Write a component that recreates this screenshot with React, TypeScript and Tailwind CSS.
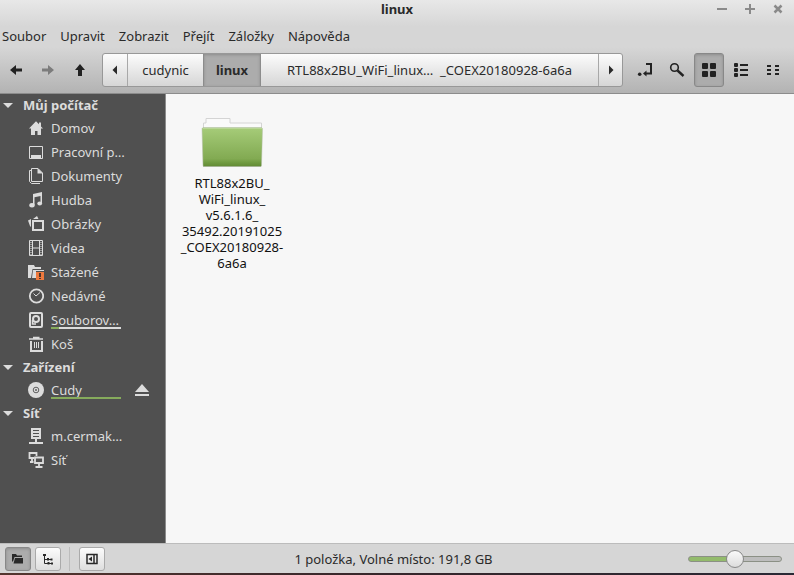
import { useState, type CSSProperties, type ReactNode } from "react";

const menus = ["Soubor", "Upravit", "Zobrazit", "Přejít", "Záložky", "Nápověda"];

const Icon = ({ children, className = "size-4" }: { children: ReactNode; className?: string }) => (
  <svg
    className={`${className} shrink-0`}
    viewBox="0 0 16 16"
    fill="none"
    stroke="currentColor"
    aria-hidden="true"
  >
    {children}
  </svg>
);

const icons: Record<string, ReactNode> = {
  home: (
    <path
      d="M8 1.2 1 8.5h2V15h4v-4h2.500v4H13V8.500h2L13 6.400V2.500h-2v1.800z"
      fill="currentColor"
      stroke="none"
    />
  ),
  desktop: (
    <>
      <path d="M1.500 2.500h13v12h-13z" />
      <path d="M3 11h10v3H3z" fill="currentColor" stroke="none" />
    </>
  ),
  documents: (
    <>
      <path d="M3.500.500h6.500l4.500 4.500v8.500h-11z" />
      <path d="M9.500 0v5.500H15z" fill="currentColor" stroke="none" />
      <path d="M3 2.500H1.500v11l2 2H12" />
    </>
  ),
  music: (
    <>
      <path d="M5 2 14 0v11.500h-1.500V4L6.500 5.300V13H5z" fill="currentColor" stroke="none" />
      <ellipse cx="4" cy="13.300" rx="2.700" ry="2.200" fill="currentColor" stroke="none" />
      <ellipse cx="11.700" cy="11.500" rx="2.400" ry="2" fill="currentColor" stroke="none" />
    </>
  ),
  pictures: (
    <>
      <path d="M5 5h10v9H5z" strokeWidth="2" />
      <path d="M0 4.500 3 3v8L2 10zM5 3l4-3 1.500 3z" fill="currentColor" stroke="none" />
    </>
  ),
  videos: (
    <>
      <path d="M1.500.500h13v15h-13zM4.500 1v14M11.500 1v14M4.500 8h7" />
      <path d="M3 2v13M13 2v13" strokeDasharray="1 1" />
    </>
  ),
  downloads: (
    <>
      <path d="M0 1h6l1 2h6v2H4.500L3 14H0z" fill="currentColor" stroke="none" />
      <path d="M5 6h11v1H8v7H4z" fill="currentColor" stroke="none" />
      <path d="M8 8h8v8H8z" fill="#f07a3e" stroke="none" />
      <path d="M12 9v4M12 14v1" stroke="#50352a" strokeWidth="2" />
    </>
  ),
  recent: (
    <>
      <circle cx="8.500" cy="8" r="6.700" strokeWidth="1.800" />
      <path d="M5.500 5.500 8 8l4-3.500" />
    </>
  ),
  disk: (
    <>
      <rect x="2" y="1" width="12" height="14" rx="1" strokeWidth="2" />
      <circle cx="8" cy="7" r="3" strokeWidth="2" />
      <path d="M4.500 8v4H8" strokeWidth="1.500" />
    </>
  ),
  trash: (
    <>
      <path d="M1 3h14M5 1.500h6.500" strokeWidth="1.500" />
      <path d="M3 5v10h11V5" strokeWidth="2" />
      <path d="M6.500 6v6M8.500 6v6M10.500 6v6" />
    </>
  ),
  cd: (
    <>
      <circle cx="8" cy="8" r="8" fill="currentColor" stroke="none" />
      <circle cx="8" cy="8" r="2.800" stroke="#606060" />
      <circle cx="8" cy="8" r="1" fill="#606060" stroke="none" />
    </>
  ),
  server: (
    <>
      <path d="M3 0h10v11H3z" fill="currentColor" stroke="none" />
      <path d="M5 2.500h6M5 5.500h6M5 8.500h6" stroke="#505050" />
      <path d="M8 11v3M1 15h14" strokeWidth="2" />
    </>
  ),
  network: (
    <>
      <path d="M8.500 4V1h-7v5H6M4 7v2.500M2 10h3.500" strokeWidth="1.800" />
      <path d="M7 5.500h8v5.500H7zM11 11v4M7.500 15h7" strokeWidth="1.800" />
    </>
  ),
};

type Place = { icon: string; label: string; used?: number; eject?: boolean };

const sections: { title: string; places: Place[] }[] = [
  {
    title: "Můj počítač",
    places: [
      { icon: "home", label: "Domov" },
      { icon: "desktop", label: "Pracovní p…" },
      { icon: "documents", label: "Dokumenty" },
      { icon: "music", label: "Hudba" },
      { icon: "pictures", label: "Obrázky" },
      { icon: "videos", label: "Videa" },
      { icon: "downloads", label: "Stažené" },
      { icon: "recent", label: "Nedávné" },
      { icon: "disk", label: "Souborov…", used: 12 },
      { icon: "trash", label: "Koš" },
    ],
  },
  {
    title: "Zařízení",
    places: [{ icon: "cd", label: "Cudy", used: 100, eject: true }],
  },
  {
    title: "Síť",
    places: [
      { icon: "server", label: "m.cermak…" },
      { icon: "network", label: "Síť" },
    ],
  },
];

const TitleBar = () => (
  <div className="grid h-5 grid-cols-[1fr_auto_1fr] items-start">
    <h1 className="col-start-2 font-bold">linux</h1>
    <div className="flex justify-end pr-0.5 pt-0.5 text-[#8a8a8a]">
      <button type="button" aria-label="Minimalizovat" className="flex w-7 justify-center">
        <Icon>
          <path d="M3 7h10" strokeWidth="2" />
        </Icon>
      </button>
      <button type="button" aria-label="Maximalizovat" className="flex w-7 justify-center">
        <Icon>
          <path d="M3 7h10M8 2v10" strokeWidth="2" />
        </Icon>
      </button>
      <button type="button" aria-label="Zavřít" className="flex w-7 justify-center">
        <Icon>
          <path d="m4.500 3.500 7 7M11.500 3.500l-7 7" strokeWidth="2.500" />
        </Icon>
      </button>
    </div>
  </div>
);

const MenuBar = () => (
  <nav className="flex h-8 items-center gap-3.5 pl-0.5">
    {menus.map((menu) => (
      <button key={menu} type="button">
        {menu}
      </button>
    ))}
  </nav>
);

const ToolButton = ({
  label,
  active,
  disabled,
  children,
}: {
  label: string;
  active?: boolean;
  disabled?: boolean;
  children: ReactNode;
}) => (
  <button
    type="button"
    aria-label={label}
    disabled={disabled}
    className={`flex h-[34px] w-[30px] items-center justify-center rounded-[3px] border ${
      active
        ? "border-[#888888] bg-[#acacac] shadow-[inset_0_1px_3px_#8c8c8c]"
        : "border-transparent"
    } ${disabled ? "text-[#7c7c7c]" : "text-[#222222]"}`}
  >
    <Icon>{children}</Icon>
  </button>
);

const PathBar = () => (
  <div className="flex h-[34px] min-w-0 flex-1 overflow-hidden rounded-[3px] border border-[#989898] bg-linear-to-b from-[#fcfcfc] to-[#d6d6d6]">
    <button
      type="button"
      aria-label="Posunout doleva"
      className="flex w-[25px] shrink-0 items-center justify-center border-r border-[#a8a8a8]"
    >
      <Icon>
        <path d="M10 3.500v9L5.500 8z" fill="currentColor" stroke="none" />
      </Icon>
    </button>
    <button type="button" className="w-[75px] shrink-0">
      cudynic
    </button>
    <button
      type="button"
      className="w-[58px] shrink-0 border-x border-[#8c8c8c] bg-[#acacac] font-bold shadow-[inset_0_1px_3px_#8c8c8c]"
    >
      linux
    </button>
    <button type="button" className="min-w-0 flex-1 truncate whitespace-pre">
      {"RTL88x2BU_WiFi_linux…  _COEX20180928-6a6a"}
    </button>
    <button
      type="button"
      aria-label="Posunout doprava"
      className="flex w-6 shrink-0 items-center justify-center border-l border-[#a8a8a8]"
    >
      <Icon>
        <path d="M6 3.500v9L10.500 8z" fill="currentColor" stroke="none" />
      </Icon>
    </button>
  </div>
);

const Toolbar = () => (
  <div className="flex items-center gap-[7px] border-b border-[#8c8c8c] pb-1.5 pl-px pr-1.5 pt-px">
    <div className="flex gap-0.5">
      <ToolButton label="Zpět">
        <path d="M2 8l6-5v3.500h6v3H8V13z" fill="currentColor" stroke="none" />
      </ToolButton>
      <ToolButton label="Vpřed" disabled>
        <path d="M14 8 8 3v3.500H2v3h6V13z" fill="currentColor" stroke="none" />
      </ToolButton>
      <ToolButton label="Nahoru">
        <path d="M8 2 3 8h3v6h4V8h3z" fill="currentColor" stroke="none" />
      </ToolButton>
    </div>
    <PathBar />
    <div className="flex gap-0.5">
      <ToolButton label="Zadat umístění">
        <path d="M9 2h5v9.500H8.500" strokeWidth="2" />
        <path d="M6 11.500 9.500 8.500v6z" fill="currentColor" stroke="none" />
        <circle cx="2.700" cy="12.300" r="1.800" fill="currentColor" stroke="none" />
      </ToolButton>
      <ToolButton label="Hledat">
        <circle cx="5.500" cy="5.500" r="3.800" strokeWidth="1.600" />
        <path d="m8.500 8.500 6 5.500" strokeWidth="2.400" />
      </ToolButton>
      <ToolButton label="Ikony" active>
        <g fill="currentColor" stroke="none">
          <rect x="1" y="1" width="6" height="6" rx="1" />
          <rect x="9" y="1" width="6" height="6" rx="1" />
          <rect x="1" y="9" width="6" height="6" rx="1" />
          <rect x="9" y="9" width="6" height="6" rx="1" />
        </g>
      </ToolButton>
      <ToolButton label="Seznam">
        <g fill="currentColor" stroke="none">
          <rect x="1" y="1" width="4" height="4" rx="1" />
          <rect x="1" y="6" width="4" height="4" rx="1" />
          <rect x="1" y="11" width="4" height="4" rx="1" />
        </g>
        <path d="M7 3h8M7 8h8M7 13h8" strokeWidth="2" />
      </ToolButton>
      <ToolButton label="Kompaktní">
        <path d="M2 4h4M2 8h4M2 12h4M10 4h4M10 8h4M10 12h4" strokeWidth="2" />
      </ToolButton>
    </div>
  </div>
);

const PlaceRow = ({ icon, label, used, eject }: Place) => (
  <li className="flex h-6 items-center pl-7 pr-[15px]">
    <a href="#" className="flex flex-1 items-center gap-[7px]">
      <Icon>{icons[icon]}</Icon>
      <span className="relative w-[70px] whitespace-nowrap">
        {label}
        {used !== undefined && (
          <span className="absolute bottom-0 left-0 h-0.5 w-full bg-[#dcdcdc]">
            <span className="block h-full bg-[#86ab5c]" style={{ width: `${used}%` }} />
          </span>
        )}
      </span>
    </a>
    {eject && (
      <button type="button" aria-label="Vysunout">
        <Icon>
          <path d="M8 2l7 8H1zM1 12h14v2H1z" fill="currentColor" stroke="none" />
        </Icon>
      </button>
    )}
  </li>
);

const Sidebar = () => (
  <aside className="w-[166px] shrink-0 border-r border-[#8c8c8c] bg-[#505050] text-[#dcdcdc]">
    {sections.map(({ title, places }) => (
      <section key={title}>
        <h2 className="flex h-[22px] items-center gap-[7px] font-bold">
          <Icon>
            <path d="M3 6h10l-5 5z" fill="currentColor" stroke="none" />
          </Icon>
          {title}
        </h2>
        <ul>
          {places.map((place) => (
            <PlaceRow key={place.label} {...place} />
          ))}
        </ul>
      </section>
    ))}
  </aside>
);

const FolderIcon = () => (
  <svg className="h-[52px] w-16" viewBox="0 0 64 52" aria-hidden="true">
    <defs>
      <linearGradient id="folder" x1="0" y1="0" x2="0" y2="1">
        <stop offset="0" stopColor="#a6cc79" />
        <stop offset="0.800" stopColor="#82aa52" />
        <stop offset="0.900" stopColor="#6f9a40" />
        <stop offset="1" stopColor="#628a34" />
      </linearGradient>
    </defs>
    <path d="M3.500 12V7h2.500V2.500h24V7H61.500v6" fill="#fafafa" stroke="#d4d4d4" />
    <path d="M3 49.500h58v1.500H3z" fill="#c4c4c4" />
    <path
      d="M3 11.500h58.500l1 1-1 37q0 1-1 1H4q-1 0-1-1l-1-37z"
      fill="url(#folder)"
      stroke="#b5bfab"
      strokeWidth="0.500"
    />
    <path d="M3 12.500h59" stroke="#b9d695" />
  </svg>
);

const FileView = () => (
  <main className="min-w-0 flex-1 bg-[#f7f7f7] px-1.5 pt-[22px]">
    <a href="#" className="flex w-30 flex-col items-center text-center text-[#111111]">
      <FolderIcon />
      <span className="mt-[7px] whitespace-pre-line leading-4">
        {"RTL88x2BU_\nWiFi_linux_\nv5.6.1.6_\n35492.20191025\n_COEX20180928-\n6a6a"}
      </span>
    </a>
  </main>
);

const StatusButton = ({
  label,
  active,
  children,
}: {
  label: string;
  active?: boolean;
  children: ReactNode;
}) => (
  <button
    type="button"
    aria-label={label}
    className={`flex h-6 w-[26px] items-center justify-center rounded-[3px] border ${
      active
        ? "border-[#888888] bg-[#acacac] shadow-[inset_0_1px_3px_#8c8c8c]"
        : "border-[#aaaaaa] bg-linear-to-b from-[#fcfcfc] to-[#dedede]"
    }`}
  >
    <Icon>{children}</Icon>
  </button>
);

const StatusBar = () => {
  const [zoom, setZoom] = useState(50);

  return (
    <footer className="grid h-[30px] grid-cols-[1fr_auto_1fr] items-center border-t border-[#bcbcbc] bg-[#d6d6d6] pl-[5px] pr-3">
      <div className="flex items-center gap-1">
        <StatusButton label="Místa" active>
          <path
            d="M2 3h4l1 1.500h5V6H4.500L3 10.500H2zM5 7h8v5.500H3.500z"
            fill="currentColor"
            stroke="none"
          />
        </StatusButton>
        <StatusButton label="Strom">
          <path d="M4.500 4v8.500H8M4.500 8.500H8M8 8.500h3M8 12.500h4" />
          <path
            d="M3 3h3v2H3zM7 7h2v2.500H7zM10.500 7.500h2v2h-2zM7.500 11h2v2.500h-2zM11 11.500h2v2h-2z"
            fill="currentColor"
            stroke="none"
          />
        </StatusButton>
        <span className="ml-1 mr-[5px] h-6 w-px bg-[#bcbcbc]" />
        <StatusButton label="Skrýt postranní lištu">
          <path d="M3 3.500h10v9H3zM10 4v8" strokeWidth="1.500" />
          <path d="M8 5.500v5L4.500 8z" fill="currentColor" stroke="none" />
        </StatusButton>
      </div>
      <p>1 položka, Volné místo: 191,8 GB</p>
      <input
        type="range"
        aria-label="Přiblížení"
        value={zoom}
        onChange={(e) => setZoom(Number(e.target.value))}
        style={{ "--fill": `${zoom}%` } as CSSProperties}
        className="h-5 w-[94px] appearance-none justify-self-end bg-transparent [&::-webkit-slider-runnable-track]:h-1.5 [&::-webkit-slider-runnable-track]:rounded-full [&::-webkit-slider-runnable-track]:border [&::-webkit-slider-runnable-track]:border-[#8b9085] [&::-webkit-slider-runnable-track]:bg-[linear-gradient(to_right,#93bb6c_var(--fill),#bdbdbd_var(--fill))] [&::-webkit-slider-thumb]:-mt-[7px] [&::-webkit-slider-thumb]:size-[18px] [&::-webkit-slider-thumb]:appearance-none [&::-webkit-slider-thumb]:rounded-full [&::-webkit-slider-thumb]:border [&::-webkit-slider-thumb]:border-[#888888] [&::-webkit-slider-thumb]:bg-linear-to-b [&::-webkit-slider-thumb]:from-[#fafafa] [&::-webkit-slider-thumb]:to-[#dcdcdc]"
      />
    </footer>
  );
};

export default function App() {
  return (
    <div className="flex min-h-screen flex-col bg-[#d6d6d6] font-['Noto_Sans',sans-serif] text-[13px] leading-[18px] text-[#2a2a2a]">
      <header className="bg-[linear-gradient(#e8e8e8,#d6d6d6_28%,#d6d6d6_50%,#b2b2b2)]">
        <TitleBar />
        <MenuBar />
        <Toolbar />
      </header>
      <div className="flex flex-1">
        <Sidebar />
        <FileView />
      </div>
      <StatusBar />
      <div className="h-0.5 bg-linear-to-r from-[#54352e] via-[#35262b] to-[#2a2935]" />
    </div>
  );
}
